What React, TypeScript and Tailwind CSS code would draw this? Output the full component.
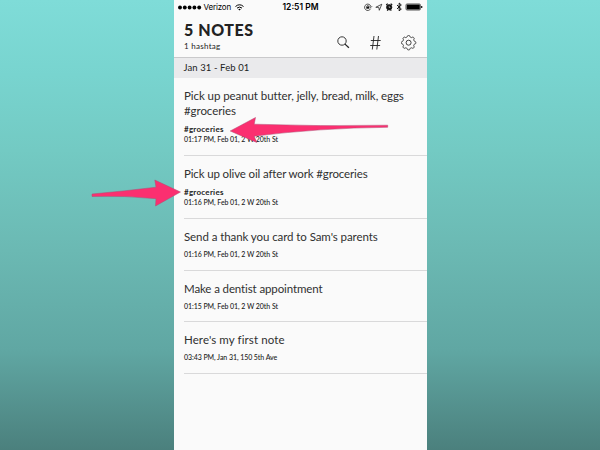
import React from "react";

type Note = { lines: string[]; tag?: string; meta: string; size: string; spacing: string };

const notes: Note[] = [
  {
    lines: ["Pick up peanut butter, jelly, bread, milk, eggs", "#groceries"],
    tag: "#groceries",
    meta: "01:17 PM, Feb 01, 2 W 20th St",
    size: "h-[78px]",
    spacing: "tracking-[-0.07px]",
  },
  {
    lines: ["Pick up olive oil after work #groceries"],
    tag: "#groceries",
    meta: "01:16 PM, Feb 01, 2 W 20th St",
    size: "h-[63px]",
    spacing: "tracking-[-0.14px]",
  },
  {
    lines: ["Send a thank you card to Sam's parents"],
    meta: "01:16 PM, Feb 01, 2 W 20th St",
    size: "h-[52px]",
    spacing: "tracking-[-0.08px]",
  },
  {
    lines: ["Make a dentist appointment"],
    meta: "01:15 PM, Feb 01, 2 W 20th St",
    size: "h-[51px]",
    spacing: "tracking-[-0.12px]",
  },
  {
    lines: ["Here's my first note"],
    meta: "03:43 PM, Jan 31, 150 5th Ave",
    size: "h-[52px]",
    spacing: "tracking-[0.1px]",
  },
];

function StatusBar() {
  return (
    <div className="flex h-[14px] items-center pl-[4px] pr-[3px] font-['Inter',sans-serif] text-black">
      <div className="flex w-[105px] items-center">
        <svg width="24" height="5" viewBox="0 0 24 5">
          {[2, 6.8, 11.6, 16.4, 21.2].map((x) => (
            <circle key={x} cx={x} cy="2.5" r="1.95" />
          ))}
        </svg>
        <span className="ml-[2px] w-[31px] text-[8px] leading-[14px] tracking-[-0.02em]">Verizon</span>
        <svg width="9" height="7" viewBox="0 0 9 7" fill="none" stroke="#000" strokeWidth="1">
          <path d="M.5 2.5Q4.5-1 8.5 2.5M2 4.1Q4.5 2 7 4.1" />
          <path d="M3.2 5.2Q4.5 4.2 5.8 5.2L4.5 6.6Z" fill="#000" stroke="none" />
        </svg>
      </div>
      <span className="flex-1 whitespace-nowrap text-[8.500px] font-semibold leading-[14px]">12:51 PM</span>
      <svg width="61" height="10" viewBox="0 0 61 10" fill="none" stroke="#111" strokeWidth=".7">
        <path d="M7.700 6.600A3.200 3.200 0 1 1 7.900 4.600M6.600 4.400L7.900 5.500L9 4.300" />
        <rect x="3.300" y="4.600" width="3" height="2.100" fill="#111" stroke="none" />
        <path d="M3.900 4.700V4Q4.800 2.700 5.700 4V4.700" />
        <path d="M12.800 5.300L18.800 2.200L16.300 8.300L15.800 5.400Z" />
        <circle cx="26.200" cy="5.300" r="2.700" fill="#111" />
        <path d="M23.200 3L24.700 1.700M29.200 3L27.700 1.700M24.200 8.800L24.800 7.800M28.200 8.800L27.600 7.800" strokeWidth="1.100" />
        <path d="M26.200 3.900V5.500H27.400" stroke="#fff" strokeWidth=".5" />
        <path d="M34 3L38.300 6.900L36.200 9V1L38.300 3L34 6.900" strokeWidth="1" />
        <rect x="42.900" y="1.900" width="14.600" height="6.200" rx="1.300" strokeWidth=".6" />
        <rect x="43.600" y="2.600" width="13.200" height="4.800" rx=".5" fill="#000" stroke="none" />
        <path d="M58.700 4V6" strokeWidth="1.200" />
      </svg>
    </div>
  );
}

function gearOutline() {
  const points: string[] = [];
  for (let i = 0; i <= 128; i++) {
    const a = (i / 128) * Math.PI * 2;
    const r = 6.5 + 0.75 * Math.tanh(2 * Math.cos(a * 8));
    points.push(`${(7.6 + r * Math.sin(a)).toFixed(2)},${(7.7 - r * Math.cos(a)).toFixed(2)}`);
  }
  return points.join(" ");
}

function Header() {
  return (
    <header className="flex h-[44px] justify-between border-b border-[#c9c9cb] pl-[10.500px] pr-[10px]">
      <div className="pt-[6px]">
        <h1 className="whitespace-nowrap text-[16px] font-black leading-[19px] tracking-[0.035em] text-[#222]">5 NOTES</h1>
        <p className="text-[8px] leading-[14px] tracking-[0.035em] text-[#222]">1 hashtag</p>
      </div>
      <div className="mt-[21px] flex h-[16px] text-[#222]">
        <svg className="mr-[16px]" width="16" height="16" viewBox="0 0 16 16" fill="none" stroke="currentColor">
          <circle cx="6" cy="6" r="4.200" strokeWidth=".9" />
          <path d="M9 9.100L12.900 12.800" strokeWidth="1.300" />
        </svg>
        <svg className="mr-[17px]" width="16" height="16" viewBox="0 0 16 16" fill="none" stroke="currentColor" strokeWidth=".9">
          <path d="M6 1L4.300 14.500M10.500 1L8.800 14.500M2.800 5.500H12.700M2.200 10.500H12.100" />
        </svg>
        <svg width="16" height="16" viewBox="0 0 16 16" fill="none" stroke="currentColor" strokeWidth=".85">
          <polygon points={gearOutline()} />
          <circle cx="7.600" cy="7.700" r="2.500" />
        </svg>
      </div>
    </header>
  );
}

function NoteRow({ note }: { note: Note }) {
  return (
    <li className={`ml-[10px] border-b border-[#d9d9da] pl-[.5px] pt-[11px] ${note.size}`}>
      {note.lines.map((line) => (
        <p key={line} className={`whitespace-nowrap text-[11.500px] leading-[14.500px] text-[#303030] ${note.spacing}`}>
          {line}
        </p>
      ))}
      {note.tag && (
        <p className="mt-[6.500px] text-[8px] font-bold leading-[9px] tracking-[0.25px] text-[#1c1c1c]">{note.tag}</p>
      )}
      <p className={`whitespace-nowrap text-[7px] font-medium leading-[11px] tracking-[-0.06px] text-[#222] ${note.tag ? "" : "mt-[4px]"}`}>
        {note.meta}
      </p>
    </li>
  );
}

export default function App() {
  return (
    <div className="relative flex h-[450px] w-[600px] justify-center overflow-hidden bg-[linear-gradient(180deg,#7fdcd8_0px,#78d4cf_75px,#73cac3_150px,#6bb9b3_250px,#60a7a3_350px,#4b807d_450px)] font-['Lato','Noto_Sans',sans-serif]">
      <main className="h-[450px] w-[253px] bg-[#fafafa]">
        <StatusBar />
        <Header />
        <div className="flex h-[20px] items-center bg-[#eaeaec] pl-[10px] text-[9.500px] tracking-[0.1px] text-[#222]">
          Jan 31 - Feb 01
        </div>
        <ul>
          {notes.map((note) => (
            <NoteRow key={note.lines[0]} note={note} />
          ))}
        </ul>
      </main>
      <svg className="absolute inset-0" width="600" height="450" viewBox="0 0 600 450" fill="#fb2f70" stroke="#b04a72" strokeWidth=".5">
        <path d="M230.200 131L255.500 117.500L254.200 124.200Q320 126.500 387.700 125.200V127.300Q320 128 254.200 136.200L256.800 142.500Z" />
        <path d="M180.500 192L154.800 180L156 187.200Q125 191 92 194V196.500Q125 195.500 156 198.700L155.500 206Z" />
      </svg>
    </div>
  );
}
